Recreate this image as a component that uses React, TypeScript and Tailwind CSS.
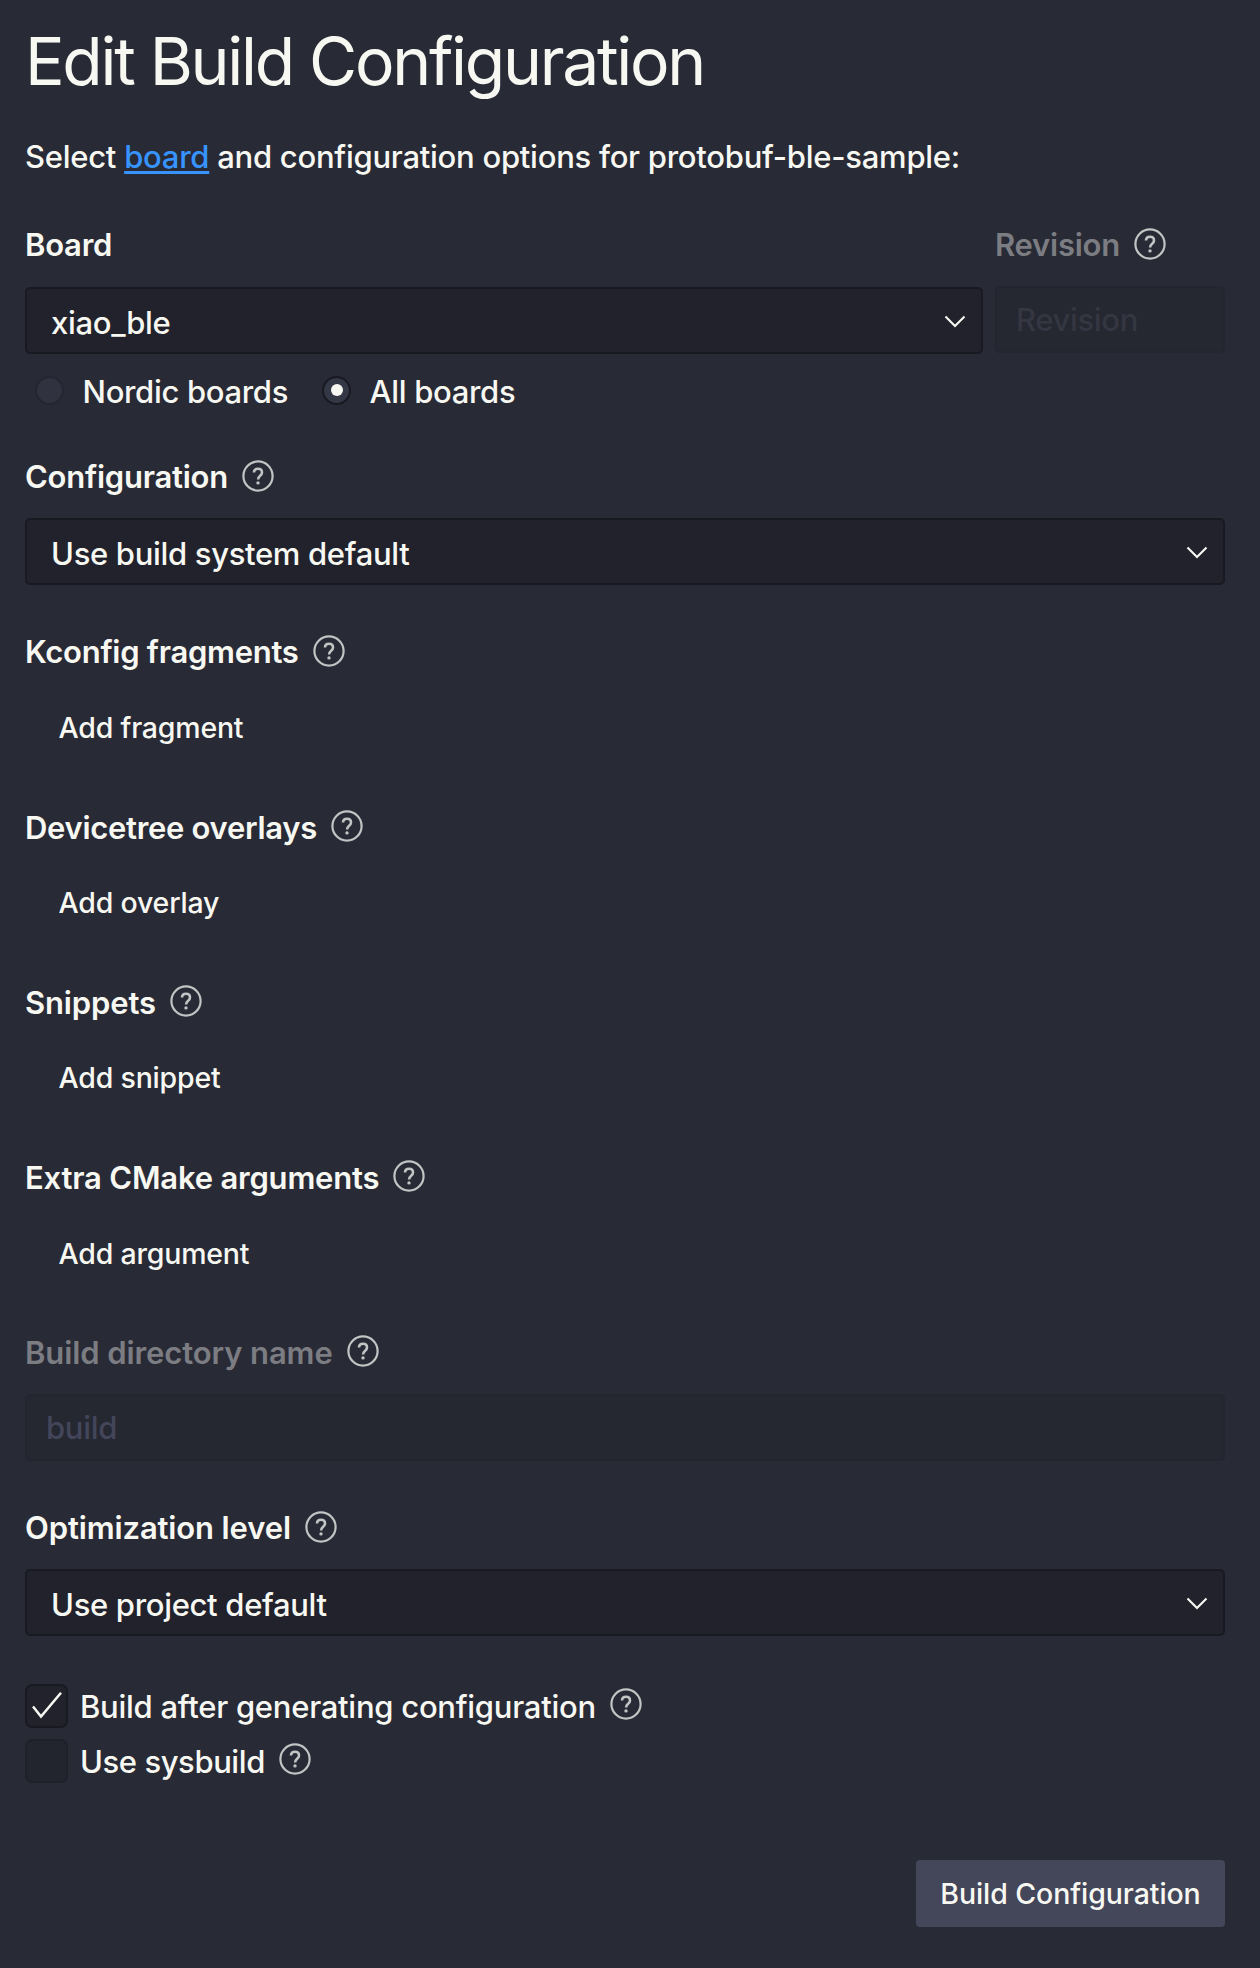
import React, { useState } from 'react';

interface LabelProps {
    text: string;
    disabled?: boolean;
    help?: boolean;
    tracking?: string;
}

const HelpIcon: React.FC = () => (
    <svg className="ml-[14px] -mt-[3px] h-8 w-8 shrink-0" viewBox="0 0 32 32" fill="none" stroke="#c3c4c4">
        <circle cx="16" cy="16" r="14.6" strokeWidth="2.2" />
        <path d="M12 12.6c0-2.4 1.6-3.9 4-3.9s4 1.5 4 3.7c0 1.6-.8 2.5-2.1 3.6-1.3 1.1-1.8 1.9-1.8 3.6" strokeWidth="2.6" />
        <circle cx="16" cy="22.9" r="1.7" fill="#c3c4c4" stroke="none" />
    </svg>
);

const ChevronIcon: React.FC = () => (
    <svg className="mt-[2px] h-[14px] w-[22px]" viewBox="0 0 22 14" fill="none" stroke="#f8f8f2" strokeWidth="2.1">
        <path d="M1.5 1.5 11 11l9.5-9.5" />
    </svg>
);

const Label: React.FC<LabelProps> = ({ text, disabled, help = true, tracking = 'tracking-[-0.25px]' }) => (
    <div className="flex h-8 items-center whitespace-nowrap">
        <span className={`text-[31px] leading-8 font-semibold ${tracking} ${disabled ? 'text-[#7c7d82]' : ''}`}>{text}</span>
        {help && <HelpIcon />}
    </div>
);

const Select: React.FC<{ value: string; className?: string }> = ({ value, className = '' }) => (
    <button className={`flex h-[67px] items-center justify-between rounded-[5px] border-2 border-[#191a21] bg-[#21222c] pr-[15px] pl-[24px] ${className}`}>
        <span className="pt-[4px] text-[31px] leading-8 tracking-[-0.32px]">{value}</span>
        <ChevronIcon />
    </button>
);

const listSections = [
    { label: 'Kconfig fragments', action: 'Add fragment', tracking: 'tracking-[-0.27px]' },
    { label: 'Devicetree overlays', action: 'Add overlay', tracking: 'tracking-[-0.3px]' },
    { label: 'Snippets', action: 'Add snippet', tracking: 'tracking-[-0.13px]' },
    { label: 'Extra CMake arguments', action: 'Add argument', tracking: 'tracking-[-0.2px]' },
];

const App: React.FC = () => {
    const [boards, setBoards] = useState<'nordic' | 'all'>('all');
    const [buildAfter, setBuildAfter] = useState(true);
    const [sysbuild, setSysbuild] = useState(false);

    const radios = [
        { id: 'nordic' as const, label: 'Nordic boards' },
        { id: 'all' as const, label: 'All boards' },
    ];

    const checks = [
        { label: 'Build after generating configuration', checked: buildAfter, toggle: setBuildAfter, tracking: 'tracking-[-0.26px]' },
        { label: 'Use sysbuild', checked: sysbuild, toggle: setSysbuild, tracking: 'tracking-[-0.42px]' },
    ];

    return (
        <div className="flex h-[1968px] w-[1260px] flex-col bg-[#282a36] pr-[35px] pl-[25px] font-['Inter',sans-serif] font-[450] text-[#f8f8f2]">
            <h1 className="mt-[23px] h-[76px] text-[66px] leading-[76px] font-[440] tracking-[-2.3px] whitespace-nowrap">Edit Build Configuration</h1>
            <p className="mt-[42px] h-8 text-[31px] leading-8 tracking-[-0.26px] whitespace-nowrap">
                Select <a href="#" className="text-[#3794ff] underline decoration-[3px] underline-offset-[3px]">board</a> and configuration options for protobuf-ble-sample:
            </p>

            <div className="mt-[56px] flex h-[125px] gap-3">
                <div className="flex w-[958px] flex-col">
                    <Label text="Board" help={false} />
                    <Select value="xiao_ble" className="mt-[26px]" />
                </div>
                <div className="flex w-[230px] flex-col">
                    <Label text="Revision" disabled />
                    <div className="mt-[25px] flex h-[67px] items-center rounded-[5px] border-2 border-[#232530] bg-[#252731] pl-[19px] text-[31px] leading-8 tracking-[-0.35px] text-[#343642]">
                        Revision
                    </div>
                </div>
            </div>

            <div className="mt-[21px] flex h-[30px] gap-[34px] pl-[10px]">
                {radios.map(radio => (
                    <button key={radio.id} onClick={() => setBoards(radio.id)} className="flex items-center">
                        <span className={`flex h-[29px] w-[29px] items-center justify-center rounded-full border-2 ${boards === radio.id ? 'border-[#191a21] bg-[#343746]' : 'border-[#242631] bg-[#30323f]'}`}>
                            {boards === radio.id && <span className="h-3 w-3 rounded-full bg-[#f8f8f2]" />}
                        </span>
                        <span className="ml-[18.5px] pt-[4px] text-[31px] leading-8 tracking-[-0.32px] whitespace-nowrap">{radio.label}</span>
                    </button>
                ))}
            </div>

            <div className="mt-[56px] flex h-[124px] flex-col">
                <Label text="Configuration" />
                <Select value="Use build system default" className="mt-[25px]" />
            </div>

            <div className="mt-[51px] flex flex-col">
                {listSections.map(section => (
                    <div key={section.label} className="h-[175.2px] pt-[0.35px]">
                        <Label text={section.label} tracking={section.tracking} />
                        <button className="mt-[43.65px] ml-[33.5px] block text-[28.5px] leading-8 tracking-[-0.2px] whitespace-nowrap">{section.action}</button>
                    </div>
                ))}
            </div>

            <div className="flex h-[175.2px] flex-col">
                <Label text="Build directory name" disabled tracking="tracking-[-0.1px]" />
                <div className="mt-[25px] flex h-[67px] items-center rounded-[5px] border-2 border-[#232530] bg-[#252731] pt-px pl-[19px] text-[31px] leading-8 tracking-[-0.3px] text-[#43465a]">
                    build
                </div>
            </div>

            <div className="flex h-[124px] flex-col pt-[0.5px]">
                <Label text="Optimization level" tracking="tracking-[-0.13px]" />
                <Select value="Use project default" className="mt-[25px]" />
            </div>

            <div className="mt-[48px] flex flex-col gap-[11px]">
                {checks.map(check => (
                    <div key={check.label} className="flex h-11 items-center">
                        <button
                            onClick={() => check.toggle(!check.checked)}
                            className={`flex h-11 w-[43px] items-center justify-center rounded-[7px] border-2 ${check.checked ? 'border-[#191a21] bg-[#21222c]' : 'border-[#1f212a] bg-[#22242e]'}`}
                        >
                            {check.checked && (
                                <svg className="h-7 w-8" viewBox="0 0 32 28" fill="none" stroke="#f8f8f2" strokeWidth="2.5">
                                    <path d="M2 14.5 10 24.5 30 .8" />
                                </svg>
                            )}
                        </button>
                        <span className={`ml-[12px] pt-[2px] text-[31px] leading-8 whitespace-nowrap ${check.tracking}`}>{check.label}</span>
                        <HelpIcon />
                    </div>
                ))}
            </div>

            <button className="mt-[77px] h-[67px] w-[309px] self-end rounded-[4px] bg-[#44475a] pt-px text-[28.5px] leading-8 tracking-[-0.08px] whitespace-nowrap">
                Build Configuration
            </button>
        </div>
    );
};

export default App;
